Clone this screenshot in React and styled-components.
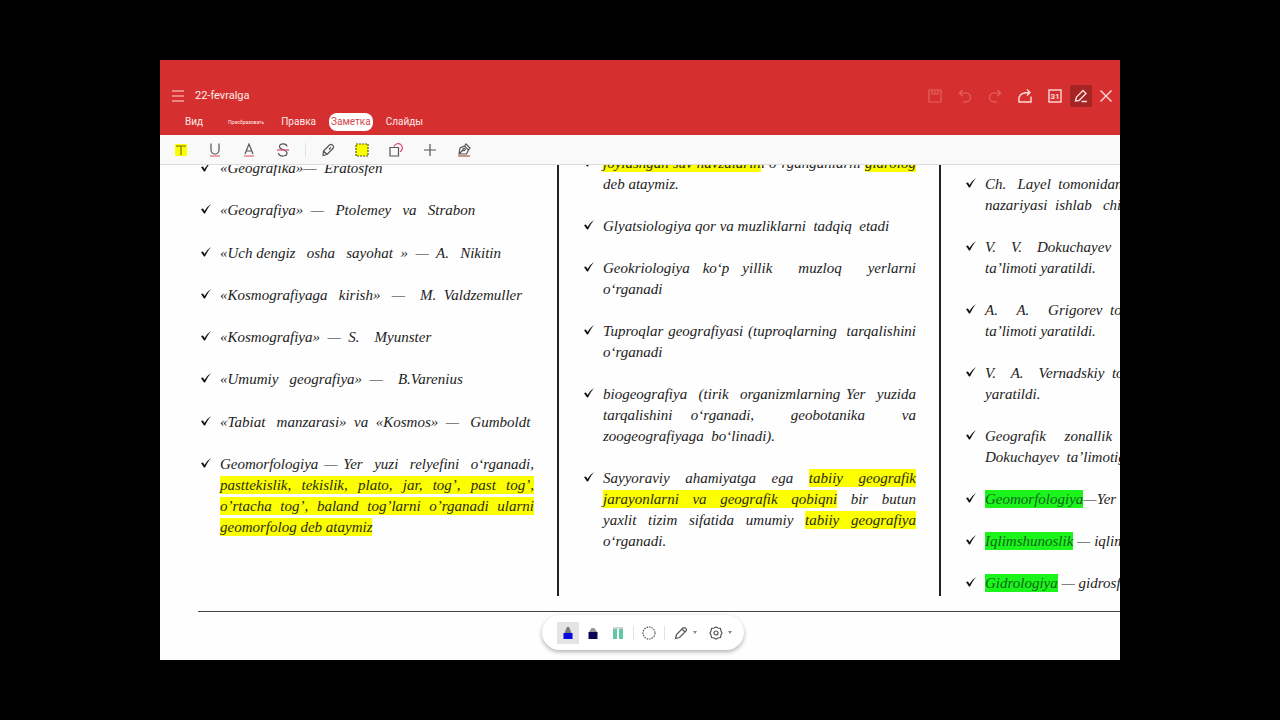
import React, { useState } from 'react';
import styled, { createGlobalStyle, css } from 'styled-components';

const GlobalStyle = createGlobalStyle`
  * {
    box-sizing: border-box;
  }
  body {
    margin: 0;
    background: #000;
    font-family: Roboto, sans-serif;
  }
`;

const Stage = styled.div`
  display: flex;
  min-height: 100vh;
  padding: 60px 12.5%;
  background: #000;
`;

const Screen = styled.main`
  position: relative;
  display: flex;
  flex-direction: column;
  flex: 1;
  min-width: 0;
  background: #fefefe;
`;

const Header = styled.header`
  display: flex;
  flex-direction: column;
  gap: 6px;
  padding: 25px 3px 4px 7px;
  background: #d5302f;
  color: #fff;
`;

const TitleBar = styled.div`
  display: flex;
  align-items: center;
  height: 22px;
`;

const Title = styled.h1`
  flex: 1;
  margin: 0 0 0 6px;
  font-size: 11px;
  font-weight: 400;
  line-height: 16px;
  color: #ffeceb;
`;

const HeaderActions = styled.div`
  display: flex;
  gap: 8px;
  margin-right: 4px;
`;

const IconButton = styled.button`
  display: flex;
  align-items: center;
  justify-content: center;
  width: 22px;
  height: 22px;
  padding: 0;
  border: none;
  border-radius: 2px;
  background: ${(props) => (props.$active ? '#a52424' : 'transparent')};
  color: ${(props) => (props.disabled ? '#e5625f' : '#ffdcd9')};
  cursor: pointer;
`;

const CloseButton = styled(IconButton)`
  margin-left: 3px;
`;

const Tabs = styled.nav`
  display: flex;
  align-items: center;
  gap: 11px;
  height: 18px;
  padding-left: 16px;
`;

const Tab = styled.button`
  height: 18px;
  padding: 0 2px;
  border: none;
  border-radius: 8px;
  background: transparent;
  color: #ffe9e7;
  font-family: inherit;
  font-size: 10px;
  line-height: 18px;
  cursor: pointer;
  ${(props) =>
    props.$small &&
    css`
      margin: 0 2px 0 10px;
      font-size: 5px;
    `}
  ${(props) =>
    props.$active &&
    css`
      background: #fff;
      color: #d2474c;
    `}
`;

const Toolbar = styled.div`
  display: flex;
  align-items: center;
  gap: 10px;
  height: 30px;
  padding-left: 9px;
  border-bottom: 1px solid #dcdcdc;
  background: #f9f9f9;
`;

const ToolButton = styled.button`
  display: flex;
  align-items: center;
  justify-content: center;
  width: 24px;
  height: 24px;
  padding: 0;
  border: none;
  background: transparent;
  color: #555;
  cursor: pointer;
`;

const Divider = styled.span`
  width: 1px;
  height: 14px;
  background: #e2e2e2;
`;

const Viewport = styled.section`
  display: flex;
  flex: 1 1 0px;
  flex-direction: column;
  justify-content: flex-end;
  min-height: 0;
  overflow: hidden;
`;

const Page = styled.article`
  flex: none;
  margin: 0 0 48px 38px;
  padding-bottom: 15px;
  border-bottom: 1px solid #444;
`;

const Columns = styled.div`
  display: grid;
  grid-template-columns: 359fr 382fr 181fr;
`;

const Column = styled.div`
  display: flex;
  min-width: 0;
  overflow: hidden;
  padding: ${(props) => props.$top || 0}px 23px ${(props) => props.$bottom}px
    ${(props) => props.$left}px;
  & + & {
    border-left: 2px solid #222;
  }
`;

const NoteList = styled.ul`
  display: flex;
  flex: 1;
  flex-direction: column;
  justify-content: ${(props) => (props.$spread ? 'space-between' : 'flex-end')};
  gap: 21px;
  min-width: 0;
  margin: 0;
  padding: 0;
  list-style: none;
`;

const NoteItem = styled.li`
  display: flex;
  gap: 8px;
  color: #222;
  font-family: 'Liberation Serif', serif;
  font-size: 15px;
  font-style: italic;
  line-height: 21px;
`;

const Bullet = styled.svg`
  flex: none;
  width: 12px;
  height: 12px;
  margin-top: 3px;
`;

const NoteBody = styled.div`
  flex: 1;
  min-width: 0;
`;

const Line = styled.div`
  white-space: pre;
  ${(props) =>
    props.$full &&
    css`
      white-space: pre-wrap;
      text-align-last: justify;
    `}
`;

const Mark = styled.mark`
  padding: 1px 0;
  background: ${(props) => (props.$green ? '#1bf51b' : '#fcff00')};
  color: ${(props) => (props.$green ? '#10651a' : '#2c2c10')};
`;

const PenBar = styled.div`
  position: absolute;
  bottom: 10px;
  left: 50%;
  display: flex;
  align-items: center;
  gap: 3px;
  height: 35px;
  margin-left: 3px;
  padding: 0 8px 0 15px;
  border-radius: 18px;
  background: #fff;
  box-shadow: 0 2px 4px rgba(0, 0, 0, 0.3);
  transform: translateX(-50%);
`;

const PenDivider = styled(Divider)`
  margin: 0 1px;
`;

const PenButton = styled(ToolButton)`
  width: ${(props) => (props.$menu ? 32 : 22)}px;
  height: 22px;
  gap: 4px;
  background: ${(props) => (props.$active ? '#e4e4e4' : 'transparent')};
`;

// Lines starting with "|" fill the column, [..] is yellow and {..} is green
const columns = [
  {
    left: 2,
    top: 5,
    bottom: 58,
    spread: true,
    notes: [
      ['«Geografika»—  Eratosfen'],
      ['«Geografiya»  —   Ptolemey   va   Strabon'],
      ['«Uch dengiz   osha   sayohat  »  —  A.   Nikitin'],
      ['«Kosmografiyaga   kirish»   —    M.  Valdzemuller'],
      ['«Kosmografiya»  —  S.    Myunster'],
      ['«Umumiy   geografiya»  —    B.Varenius'],
      ['«Tabiat   manzarasi»  va  «Kosmos»  —   Gumboldt'],
      [
        '|Geomorfologiya — Yer  yuzi  relyefini  o‘rganadi,',
        '|[pasttekislik, tekislik, plato, jar, tog’, past tog’,]',
        '|[o’rtacha tog’, baland tog’larni o’rganadi ularni]',
        '[geomorfolog deb ataymiz]',
      ],
    ],
  },
  {
    left: 24,
    bottom: 44,
    notes: [
      ['|[joylashgan suv havzalarin]i o‘rganganlarni [gidrolog]', 'deb ataymiz.'],
      ['Glyatsiologiya qor va muzliklarni  tadqiq  etadi'],
      ['|Geokriologiya  ko‘p  yillik    muzloq    yerlarni', 'o‘rganadi'],
      ['|Tuproqlar geografiyasi (tuproqlarning  tarqalishini', 'o‘rganadi'],
      [
        '|biogeografiya  (tirik  organizmlarning Yer  yuzida',
        '|tarqalishini o‘rganadi,  geobotanika  va',
        'zoogeografiyaga  bo‘linadi).',
      ],
      [
        '|Sayyoraviy ahamiyatga ega [tabiiy geografik]',
        '|[jarayonlarni va geografik qobiqni] bir butun',
        '|yaxlit tizim sifatida umumiy [tabiiy geografiya]',
        'o‘rganadi.',
      ],
    ],
  },
  {
    left: 24,
    bottom: 2,
    notes: [
      ['Ch.   Layel  tomonidan', 'nazariyasi  ishlab   chiqildi'],
      ['V.    V.    Dokuchayev', 'ta’limoti yaratildi.'],
      ['A.     A.     Grigorev  tomonidan', 'ta’limoti yaratildi.'],
      ['V.    A.    Vernadskiy  tomonidan', 'yaratildi.'],
      ['Geografik     zonallik', 'Dokuchayev  ta’limotiga'],
      ['{Geomorfologiya}—Yer'],
      ['{Iqlimshunoslik} — iqlim'],
      ['{Gidrologiya} — gidrosfera'],
    ],
  },
];

function renderLine(text, index) {
  const full = text.startsWith('|');
  const parts = (full ? text.slice(1) : text).split(/(\[.*?\]|\{.*?\})/).filter(Boolean);

  return (
    <Line key={index} $full={full}>
      {parts.map((part, i) => {
        if (part[0] === '[') return <Mark key={i}>{part.slice(1, -1)}</Mark>;
        if (part[0] === '{') return <Mark key={i} $green>{part.slice(1, -1)}</Mark>;
        return part;
      })}
    </Line>
  );
}

function Icon({ size = 16, children }) {
  return (
    <svg
      width={size}
      height={size}
      viewBox="0 0 16 16"
      fill="none"
      stroke="currentColor"
      strokeWidth="1.2"
      aria-hidden="true"
    >
      {children}
    </svg>
  );
}

function Caret() {
  return (
    <svg width="4" height="3" viewBox="0 0 4 3" aria-hidden="true">
      <path d="M0 0h4L2 3z" fill="#888" />
    </svg>
  );
}

const headerActions = [
  {
    label: 'Сохранить',
    disabled: true,
    icon: <path d="M2 2h12v12H2zM5 2v4h6V2M8 3v2" />,
  },
  {
    label: 'Отменить',
    disabled: true,
    icon: <path d="M5.5 2L2.5 5l3 3M3 5h6a4.4 4.4 0 0 1 0 8.8H6.5" />,
  },
  {
    label: 'Повторить',
    disabled: true,
    icon: <path d="M10.5 2l3 3-3 3M13 5H7a4.4 4.4 0 0 0 0 8.8h2.5" />,
  },
  {
    label: 'Поделиться',
    icon: <path strokeWidth="1.4" d="M2 8.5V14h12V8.5M2.5 9C3 6 6 4.5 12.5 4.5M10 1.5l3 3-3 3" />,
  },
  {
    label: 'Календарь',
    icon: (
      <>
        <rect x="2" y="2" width="12" height="12" strokeWidth="1.4" />
        <text
          x="8"
          y="11"
          fill="currentColor"
          stroke="none"
          textAnchor="middle"
          fontFamily="Roboto, sans-serif"
          fontSize="8"
          fontWeight="700"
        >
          31
        </text>
      </>
    ),
  },
];

const tools = [
  {
    label: 'Выделение текста',
    icon: (
      <>
        <rect x="2" y="2" width="12" height="12" fill="#fcff00" stroke="none" />
        <path stroke="#77761d" d="M4 5V4h8v1M8 4v9" />
      </>
    ),
  },
  {
    label: 'Подчёркивание',
    icon: (
      <>
        <path d="M4 1.5V8a4 4 0 0 0 8 0V1.5" />
        <path stroke="#d9697b" d="M3 14h10" />
      </>
    ),
  },
  {
    label: 'Волнистая линия',
    icon: (
      <>
        <path d="M4 12L8 2l4 10M5.5 9h5" />
        <path stroke="#d9697b" d="M3 14h10" />
      </>
    ),
  },
  {
    label: 'Зачёркивание',
    icon: (
      <>
        <path d="M12 4.5C11.5 1 4.5 1 4.5 4.800c0 3.5 7.5 2.5 7.5 6.2 0 4-8 4-8.5.2" />
        <path stroke="#d9476b" d="M2 8h12" />
      </>
    ),
  },
  null,
  {
    label: 'Маркер',
    icon: <path d="M3 13.5L3.5 9l6-6a2 2 0 0 1 2.8 0l.7.7a2 2 0 0 1 0 2.8l-6 6zM3.5 9L7 12.5M9 7.5l2-2" />,
  },
  {
    label: 'Выделение области',
    icon: <rect x="2" y="2" width="12" height="12" fill="#fcff00" stroke="#55551a" strokeDasharray="2 1" />,
  },
  {
    label: 'Фигуры',
    icon: (
      <>
        <path stroke="#d9476b" d="M6 4.5a4.3 4.3 0 1 1 6 5.2" />
        <path d="M2 5.5h8.5V14H2z" />
      </>
    ),
  },
  { label: 'Добавить', icon: <path d="M8 2v12M2 8h12" /> },
  {
    label: 'Подпись',
    icon: (
      <>
        <path d="M3 12l1-6 4.5-2 4 4-2 4zM3 12l4-4M8.5 4L10 2l4 4-1.5 2" />
        <circle cx="8" cy="7.5" r="1.2" />
        <path stroke="#a55" d="M2 14h12" />
      </>
    ),
  },
];

function App() {
  const [tab, setTab] = useState('Заметка');

  return (
    <>
      <GlobalStyle />
      <Stage>
        <Screen>
          <Header>
            <TitleBar>
              <IconButton aria-label="Меню">
                <Icon>
                  <path d="M2 3h12M2 8h12M2 13h12" />
                </Icon>
              </IconButton>
              <Title>22-fevralga</Title>
              <HeaderActions>
                {headerActions.map(({ label, disabled, icon }) => (
                  <IconButton key={label} aria-label={label} disabled={disabled}>
                    <Icon>{icon}</Icon>
                  </IconButton>
                ))}
              </HeaderActions>
              <IconButton $active aria-label="Редактировать">
                <Icon>
                  <path strokeWidth="1.4" d="M2.5 13l1-4L10 2.5l3 3-7 7zM8.5 13.5H14" />
                </Icon>
              </IconButton>
              <CloseButton aria-label="Закрыть">
                <Icon>
                  <path strokeWidth="1.4" d="M2.5 2.5l11 11M13.5 2.5l-11 11" />
                </Icon>
              </CloseButton>
            </TitleBar>
            <Tabs>
              {['Вид', 'Преобразовать', 'Правка', 'Заметка', 'Слайды'].map((name) => (
                <Tab
                  key={name}
                  $small={name === 'Преобразовать'}
                  $active={name === tab}
                  onClick={() => setTab(name)}
                >
                  {name}
                </Tab>
              ))}
            </Tabs>
          </Header>

          <Toolbar>
            {tools.map((tool, i) =>
              tool ? (
                <ToolButton key={i} aria-label={tool.label}>
                  <Icon>{tool.icon}</Icon>
                </ToolButton>
              ) : (
                <Divider key={i} />
              )
            )}
          </Toolbar>

          <Viewport>
            <Page>
              <Columns>
                {columns.map((column, c) => (
                  <Column key={c} $left={column.left} $top={column.top} $bottom={column.bottom}>
                    <NoteList $spread={column.spread}>
                      {column.notes.map((lines, n) => (
                        <NoteItem key={n}>
                          <Bullet viewBox="0 0 12 12" aria-hidden="true">
                            <path d="M1 6l2-.5L4.5 8Q7 3.5 11 1 7.500 5 5 10.5H4z" fill="#111" />
                          </Bullet>
                          <NoteBody>{lines.map(renderLine)}</NoteBody>
                        </NoteItem>
                      ))}
                    </NoteList>
                  </Column>
                ))}
              </Columns>
            </Page>
          </Viewport>

          <PenBar>
            <PenButton $active aria-label="Синяя ручка">
              <Icon>
                <path d="M4.500 8L7 2h2l2.500 6z" fill="#777" stroke="none" />
                <path d="M3.5 8h9v6h-9z" fill="#0a0ae0" stroke="none" />
              </Icon>
            </PenButton>
            <PenButton aria-label="Тёмная ручка">
              <Icon>
                <path d="M4 7l2.5-4h3L12 7z" fill="#9a9a90" stroke="none" />
                <path d="M3.5 7h9v7h-9z" fill="#0d0658" stroke="none" />
              </Icon>
            </PenButton>
            <PenButton aria-label="Маркер">
              <Icon>
                <path d="M3 2h10v2H3z" fill="#cfd6d3" stroke="none" />
                <path d="M3 4h4v10H3zM9 4h4v10H9z" fill="#62c9a6" stroke="none" />
              </Icon>
            </PenButton>
            <PenDivider />
            <PenButton aria-label="Лассо">
              <Icon>
                <circle cx="8" cy="8" r="6" strokeDasharray="1.5 1" />
              </Icon>
            </PenButton>
            <PenDivider />
            <PenButton $menu aria-label="Карандаш">
              <Icon>
                <path d="M2.5 13.5l1-4L10 3a1.6 1.6 0 0 1 2.3 0l.7.7a1.6 1.6 0 0 1 0 2.3l-6.5 6.5zM9 4l3 3" />
              </Icon>
              <Caret />
            </PenButton>
            <PenButton $menu aria-label="Настройки">
              <Icon>
                <circle cx="8" cy="8" r="2" />
                <path d="M8 2l2 1 2.5.5.5 2.5 1 2-1 2-.5 2.5L10 13l-2 1-2-1-2.500-.5L3 10 2 8l1-2 .5-2.500L6 3z" />
              </Icon>
              <Caret />
            </PenButton>
          </PenBar>
        </Screen>
      </Stage>
    </>
  );
}

export default App;
